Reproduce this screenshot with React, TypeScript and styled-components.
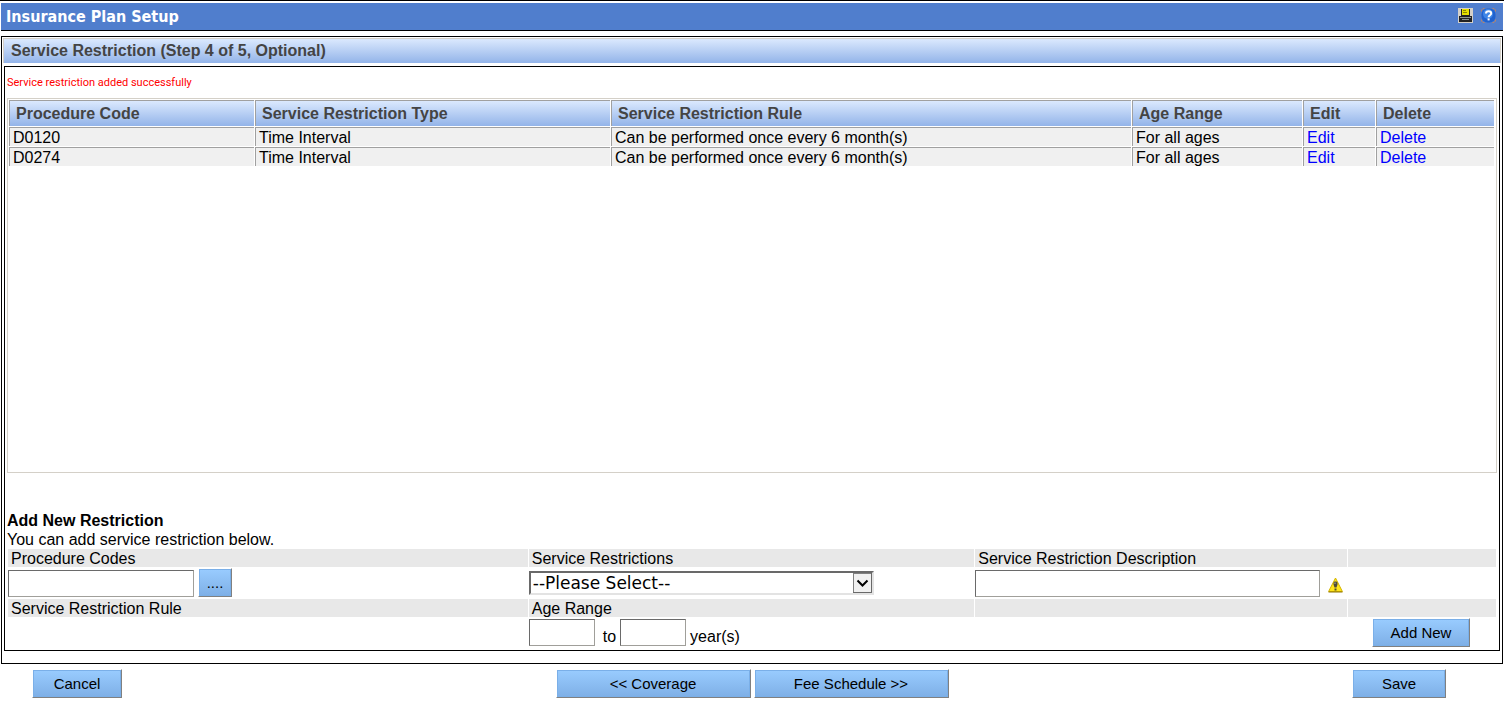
import React from "react";
import styled, { createGlobalStyle } from "styled-components";

const sans = '"Liberation Sans", Arial, sans-serif';
const tahoma = '"DejaVu Sans Condensed", "DejaVu Sans", Tahoma, sans-serif';
const verdana = '"DejaVu Sans", Verdana, sans-serif';
const headerGradient = "linear-gradient(#dbe9fe, #93b4e9)";

const GlobalStyle = createGlobalStyle`
  *, *::before, *::after { box-sizing: border-box; }
  body {
    margin: 0;
    background: #fff;
    color: #000;
    font: 16px/18px ${sans};
  }
`;

const Page = styled.div`
  border-top: 1px solid #000;
  padding: 2px 1px 4px 1px;
`;

const TitleBar = styled.header`
  display: flex;
  align-items: center;
  justify-content: space-between;
  height: 28px;
  padding: 0 7px 0 5px;
  background: #507ecd;
  border-bottom: 1px solid #000;
`;

const Title = styled.h1`
  margin: 0;
  color: #fff;
  font: bold 16px/24px ${tahoma};
`;

const Tools = styled.div`
  display: flex;
  gap: 8px;
  padding-bottom: 2px;
`;

const IconButton = styled.button`
  display: block;
  padding: 0;
  border: 0;
  background: none;
  line-height: 0;
  cursor: pointer;
`;

const Panel = styled.main`
  margin-top: 5px;
  border: 1px solid #000;
  padding: 1px 1px 12px 1px;
`;

const StepHeading = styled.h2`
  margin: 0;
  padding: 0 7px;
  border: 1px solid #d4d0c8;
  border-width: 1px 1px 0 1px;
  background: ${headerGradient};
  color: #444;
  font: bold 16px/24px ${sans};
`;

const Content = styled.section`
  margin: 3px 1px 0;
  border: 1px solid #000;
  padding: 7px 2px 1px;
`;

const Notice = styled.p`
  margin: 0 0 6px;
  color: #f00;
  font: 11px/18px Roboto, Tahoma, sans-serif;
`;

const ListFrame = styled.div`
  height: 375px;
  overflow: auto;
  border: 1px solid #d4d0c8;
  padding-right: 1px;
`;

const RestrictionTable = styled.table`
  width: 100%;
  table-layout: fixed;
  border-collapse: separate;
  border-spacing: 1px;
`;

const Col = styled.col<{ $width?: number }>`
  width: ${({ $width }) => ($width ? `${$width}px` : "auto")};
`;

const HeadCell = styled.th`
  height: 26px;
  padding: 0 6px;
  border: 1px solid #a0a0a0;
  border-width: 1px 0 0 1px;
  background: ${headerGradient};
  color: #444;
  text-align: left;
`;

const Cell = styled.td`
  height: 19px;
  padding: 1px 3px 0;
  border: 1px solid #a0a0a0;
  border-width: 1px 0 0 1px;
  background: #f0f0f0;
  line-height: 17px;
`;

const RowLink = styled.a`
  color: #00f;
  text-decoration: none;
`;

const FormHeading = styled.h3`
  margin: 38px 0 0;
  font: bold 16px/20px ${sans};
`;

const FormHint = styled.p`
  margin: 0;
  line-height: 18px;
`;

const FormGrid = styled.form`
  display: grid;
  grid-template-columns: 35fr 30fr 25fr 10fr;
  gap: 1px;
  padding: 0 1px;
`;

const LabelCell = styled.div`
  height: 18px;
  padding-left: 3px;
  background: #e8e8e8;
  line-height: 20px;
`;

const ControlCell = styled.div`
  display: flex;
  align-items: flex-end;
  height: 30px;
  padding-bottom: 1px;
`;

const SelectCell = styled(ControlCell)`
  align-items: center;
  padding-bottom: 0;
`;

const AgeCell = styled(ControlCell)`
  align-items: flex-start;
  height: 31px;
  padding: 1px 0 0;
`;

const SubmitCell = styled(ControlCell)`
  align-items: flex-start;
  justify-content: flex-end;
  padding: 0 26px 0 0;
`;

const TextBox = styled.input<{ $width: number }>`
  width: ${({ $width }) => $width}px;
  height: 27px;
  padding: 0 4px;
  border: 1px solid;
  border-color: #6a6a6a #a09f9a #a09f9a #6a6a6a;
  border-radius: 0;
  background: #fff;
  font: 16px/20px ${sans};
`;

const AgeText = styled.label`
  padding: 9px 4px 0;
`;

const AgeJoin = styled(AgeText)`
  padding-left: 8px;
`;

const SelectBox = styled.div`
  position: relative;
  width: 345px;
`;

const Select = styled.select`
  display: block;
  appearance: none;
  width: 100%;
  height: 24px;
  padding: 0 22px 0 2px;
  border: 2px solid;
  border-color: #696969 #e3e3e3 #e3e3e3 #696969;
  border-radius: 0;
  background: #fff;
  color: #000;
  font: 17px/20px ${verdana};
`;

const SelectArrow = styled.svg`
  position: absolute;
  top: 2px;
  right: 2px;
  width: 19px;
  height: 20px;
  pointer-events: none;
`;

const Button = styled.button<{ $width: number; $gap?: boolean }>`
  width: ${({ $width }) => $width}px;
  height: 29px;
  margin-left: ${({ $gap }) => ($gap ? "4px" : "0")};
  padding: 0;
  border: 1px solid;
  border-color: #fff #808080 #808080 #fff;
  border-radius: 0;
  background: linear-gradient(#99ccff, #7eafe6);
  box-shadow: inset 0 0 0 1px #7aafe8;
  color: #000;
  font: 15px/18px ${sans};
  cursor: pointer;
`;

const WarningIcon = styled.svg`
  margin: 0 0 4px 8px;
`;

const Footer = styled.footer`
  display: grid;
  grid-template-columns: 1fr auto 1fr;
  margin-top: 5px;
`;

const FooterGroup = styled.div<{ $align: "start" | "center" | "end" }>`
  display: flex;
  justify-content: ${({ $align }) => $align};
  gap: 3px;
  padding: 0 ${({ $align }) => ($align === "end" ? 57 : 0)}px 0
    ${({ $align }) => ($align === "start" ? 31 : 0)}px;
`;

const rows = [
  { code: "D0120", type: "Time Interval", rule: "Can be performed once every 6 month(s)", age: "For all ages" },
  { code: "D0274", type: "Time Interval", rule: "Can be performed once every 6 month(s)", age: "For all ages" },
];

const PrinterIcon = () => (
  <svg width="15" height="15" viewBox="0 0 15 15" shapeRendering="crispEdges" aria-hidden="true">
    <path fill="#d4d0c8" d="M0 0h15v15H0z" />
    <path fill="#222" d="M3 1h9v7h-9zM1 8h13v5H1z" />
    <path fill="#e6e000" d="M4 1h7v6H4z" />
    <path fill="#8a8600" d="M5 2h3v1H5zM5 4h4v1H5z" />
    <path fill="#8c9494" d="M2 9h11v1H2zM4 11h7v1H4z" />
    <path fill="#222" d="M1 13h13v1H1z" />
  </svg>
);

const HelpIcon = () => (
  <svg width="15" height="15" viewBox="0 0 15 15" aria-hidden="true">
    <path d="M0.500 3.500V2L2 0.500H3.500M11.500 0.500H13L14.500 2V3.500M14.500 11.500V13L13 14.500H11.500M3.500 14.500H2L0.500 13V11.500" fill="none" stroke="#b98468" />
    <rect x="0.500" y="0.500" width="14" height="14" rx="6" fill="#1f62cf" />
    <circle cx="7" cy="6" r="5" fill="#3f86e6" />
    <path d="M5 5.400C5 2.600 10.200 2.600 10.200 5.400C10.200 7.200 7.600 7.200 7.600 9.200" fill="none" stroke="#fff" strokeWidth="2" />
    <rect x="6.600" y="10.400" width="2" height="2" fill="#fff" />
  </svg>
);

export default function App() {
  return (
    <>
      <GlobalStyle />
      <Page>
        <TitleBar>
          <Title>Insurance Plan Setup</Title>
          <Tools>
            <IconButton type="button" aria-label="Print"><PrinterIcon /></IconButton>
            <IconButton type="button" aria-label="Help"><HelpIcon /></IconButton>
          </Tools>
        </TitleBar>

        <Panel>
          <StepHeading>Service Restriction (Step 4 of 5, Optional)</StepHeading>
          <Content>
            <Notice role="status">Service restriction added successfully</Notice>
            <ListFrame>
              <RestrictionTable>
                <colgroup>
                  <Col $width={245} />
                  <Col $width={355} />
                  <Col />
                  <Col $width={170} />
                  <Col $width={72} />
                  <Col $width={118} />
                </colgroup>
                <thead>
                  <tr>
                    <HeadCell scope="col">Procedure Code</HeadCell>
                    <HeadCell scope="col">Service Restriction Type</HeadCell>
                    <HeadCell scope="col">Service Restriction Rule</HeadCell>
                    <HeadCell scope="col">Age Range</HeadCell>
                    <HeadCell scope="col">Edit</HeadCell>
                    <HeadCell scope="col">Delete</HeadCell>
                  </tr>
                </thead>
                <tbody>
                  {rows.map((row) => (
                    <tr key={row.code}>
                      <Cell>{row.code}</Cell>
                      <Cell>{row.type}</Cell>
                      <Cell>{row.rule}</Cell>
                      <Cell>{row.age}</Cell>
                      <Cell><RowLink href="#edit">Edit</RowLink></Cell>
                      <Cell><RowLink href="#delete">Delete</RowLink></Cell>
                    </tr>
                  ))}
                </tbody>
              </RestrictionTable>
            </ListFrame>

            <FormHeading>Add New Restriction</FormHeading>
            <FormHint>You can add service restriction below.</FormHint>
            <FormGrid onSubmit={(e) => e.preventDefault()}>
              <LabelCell><label htmlFor="codes">Procedure Codes</label></LabelCell>
              <LabelCell><label htmlFor="restriction">Service Restrictions</label></LabelCell>
              <LabelCell><label htmlFor="description">Service Restriction Description</label></LabelCell>
              <LabelCell />

              <ControlCell>
                <TextBox id="codes" type="text" $width={186} />
                <Button type="button" $width={34} $gap aria-label="Browse procedure codes">....</Button>
              </ControlCell>
              <SelectCell>
                <SelectBox>
                  <Select id="restriction" defaultValue="">
                    <option value="">--Please Select--</option>
                    <option value="interval">Time Interval</option>
                  </Select>
                  <SelectArrow viewBox="0 0 19 20" aria-hidden="true">
                    <rect x="0.5" y="0.5" width="18" height="19" fill="#f0f0f0" stroke="#808080" />
                    <path d="M18.500 0v19.500H0" fill="none" stroke="#696969" />
                    <path d="M4.500 7.500L9.500 12.500L14.500 7.500" fill="none" stroke="#000" strokeWidth="2" />
                  </SelectArrow>
                </SelectBox>
              </SelectCell>
              <ControlCell>
                <TextBox id="description" type="text" $width={345} />
                <WarningIcon width="15" height="16" viewBox="0 0 15 16" role="img" aria-label="Required">
                  <path d="M7.500 1L14.400 14.500H0.600Z" fill="#ffe51a" stroke="#d4b400" strokeLinejoin="round" />
                  <path d="M0.500 15H14.500" stroke="#8f7500" />
                  <path d="M5.500 5.500L6.500 4.500h2l1 1v2L8.500 10.500h-2L5.500 7.500zM6.500 11.500h2v2h-2z" fill="#4d4a3a" />
                  <path d="M6.500 5.500h1v1.500h-1z" fill="#b8b6a4" />
                </WarningIcon>
              </ControlCell>
              <ControlCell />

              <LabelCell>Service Restriction Rule</LabelCell>
              <LabelCell><label htmlFor="ageFrom">Age Range</label></LabelCell>
              <LabelCell />
              <LabelCell />

              <ControlCell />
              <AgeCell>
                <TextBox id="ageFrom" type="text" $width={66} />
                <AgeJoin htmlFor="ageTo">to</AgeJoin>
                <TextBox id="ageTo" type="text" $width={66} />
                <AgeText htmlFor="ageTo">year(s)</AgeText>
              </AgeCell>
              <ControlCell />
              <SubmitCell>
                <Button type="submit" $width={98}>Add New</Button>
              </SubmitCell>
            </FormGrid>
          </Content>
        </Panel>

        <Footer>
          <FooterGroup $align="start">
            <Button type="button" $width={90}>Cancel</Button>
          </FooterGroup>
          <FooterGroup $align="center">
            <Button type="button" $width={195}>&lt;&lt; Coverage</Button>
            <Button type="button" $width={195}>Fee Schedule &gt;&gt;</Button>
          </FooterGroup>
          <FooterGroup $align="end">
            <Button type="button" $width={94}>Save</Button>
          </FooterGroup>
        </Footer>
      </Page>
    </>
  );
}
